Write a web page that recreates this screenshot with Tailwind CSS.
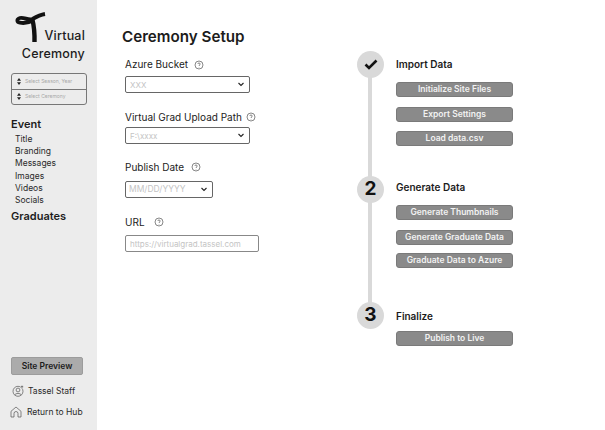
<!DOCTYPE html>
<html><head><meta charset="utf-8">
<script src="https://cdn.jsdelivr.net/npm/@tailwindcss/browser@4"></script>
</head>
<body class="bg-white">
<div class="flex w-[605px] h-[430px] overflow-hidden bg-white text-[#1c1c1c] font-['Inter',sans-serif]">

<aside class="w-[97px] h-full shrink-0 bg-[#ececec] flex flex-col">
  <div class="relative h-[73px] shrink-0">
    <svg class="absolute left-[15px] top-[12px]" width="32" height="32" viewBox="0 0 32 32" fill="none" stroke="#111" stroke-linecap="butt">
      <path d="M30 2C25 2.800 21 5 17.500 7 13.500 8.500 9 5 5 6 1.500 7 1.500 10 5 10.700 9 11.500 14 10.500 18 8.500" stroke-width="3.800"/>
      <path d="M17.500 8C19 14 19.700 22 19.500 30" stroke-width="4.400"/>
    </svg>
    <div class="absolute right-[12px] top-[27px] text-right text-[12.5px] leading-[18px] font-medium tracking-[0.2px]">Virtual<br>Ceremony</div>
  </div>
  <div class="ml-[11px] w-[76px] h-[32px] border border-[#777] rounded-[3px] flex flex-col text-[5px] text-[#a8a8a8]">
    <div class="flex-1 flex items-center border-b border-[#777] pl-[5px] gap-[4px]"><svg width="4" height="7" viewBox="0 0 4 7" fill="#222"><path d="M2 0 4 2.700H0ZM2 7 0 4.300H4Z"/></svg><span>Select Season, Year</span></div>
    <div class="flex-1 flex items-center pl-[5px] gap-[4px]"><svg width="4" height="7" viewBox="0 0 4 7" fill="#222"><path d="M2 0 4 2.700H0ZM2 7 0 4.300H4Z"/></svg><span>Select Ceremony</span></div>
  </div>
  <div class="ml-[11px] mt-[11px] text-[11px] leading-[16px] font-semibold">Event</div>
  <ul class="ml-[15px] mt-[1px] text-[8.500px] leading-[12.200px] text-[#2a2a2a]">
    <li>Title</li><li>Branding</li><li>Messages</li><li>Images</li><li>Videos</li><li>Socials</li>
  </ul>
  <div class="ml-[11px] mt-[2px] text-[11px] leading-[16px] font-semibold">Graduates</div>
  <div class="mt-auto ml-[11px] w-[72px] h-[18px] rounded-[2px] bg-[#ababab] border border-[#9c9c9c] flex items-center justify-center text-[8.500px] font-semibold">Site Preview</div>
  <div class="ml-[12px] mt-[8px] h-[16px] flex items-center gap-[4px] text-[8.500px] text-[#2a2a2a]">
    <svg width="12" height="12" viewBox="0 0 12 12" fill="none" stroke="#555" stroke-width=".7"><circle cx="6" cy="6.300" r="5"/><circle cx="6" cy="5" r="1.900"/><path d="M2.800 9.800C3.500 8 8.500 8 9.200 9.800"/><circle cx="10" cy="1.800" r="1.300" fill="#555" stroke="#ececec"/></svg>
    <span>Tassel Staff</span>
  </div>
  <div class="ml-[10px] mt-[5px] mb-[10px] h-[16px] flex items-center gap-[5px] text-[8.500px] text-[#2a2a2a]">
    <svg width="12" height="12" viewBox="0 0 12 12" fill="none" stroke="#555" stroke-width=".7" stroke-linejoin="round"><path d="M1 11V5.300L6 1l5 4.300V11H8V7.500a2 2 0 0 0-4 0V11Z"/></svg>
    <span>Return to Hub</span>
  </div>
</aside>

<main class="w-[260px] shrink-0 pl-[25px] pt-[27px]">
  <h1 class="text-[15.200px] leading-[20px] font-semibold">Ceremony Setup</h1>

  <div class="ml-[3px] mt-[9px] h-[14px] flex items-center gap-[6px] text-[10px] pt-[3px]">Azure Bucket
    <svg width="10" height="10" viewBox="0 0 10 10" fill="none" stroke="#555" stroke-width=".7"><circle cx="5" cy="5" r="4"/><path d="M3.800 4C3.800 2.600 6.200 2.600 6.200 4 6.200 5 5 5 5 6M5 7v.4"/></svg>
  </div>
  <div class="ml-[3px] mt-[6px] w-[125px] h-[17px] border border-[#666] rounded-[2px] flex items-center justify-between px-[4px] text-[8px] text-[#c4c4c4]"><span>XXX</span>
    <svg width="8" height="5" viewBox="0 0 8 5" fill="none" stroke="#222" stroke-width="1.100"><path d="M1.500 1 4 3.500 6.500 1"/></svg></div>

  <div class="ml-[3px] mt-[17px] h-[14px] flex items-center gap-[4px] text-[10px]">Virtual Grad Upload Path
    <svg width="10" height="10" viewBox="0 0 10 10" fill="none" stroke="#555" stroke-width=".7"><circle cx="5" cy="5" r="4"/><path d="M3.800 4C3.800 2.600 6.200 2.600 6.200 4 6.200 5 5 5 5 6M5 7v.4"/></svg>
  </div>
  <div class="ml-[3px] mt-[3px] w-[125px] h-[17px] border border-[#666] rounded-[2px] flex items-center justify-between px-[4px] text-[8px] text-[#c4c4c4]"><span>F:\xxxx</span>
    <svg width="8" height="5" viewBox="0 0 8 5" fill="none" stroke="#222" stroke-width="1.100"><path d="M1.500 1 4 3.500 6.500 1"/></svg></div>

  <div class="ml-[3px] mt-[16px] h-[14px] flex items-center gap-[7px] text-[10px]">Publish Date
    <svg width="10" height="10" viewBox="0 0 10 10" fill="none" stroke="#555" stroke-width=".7"><circle cx="5" cy="5" r="4"/><path d="M3.800 4C3.800 2.600 6.200 2.600 6.200 4 6.200 5 5 5 5 6M5 7v.4"/></svg>
  </div>
  <div class="ml-[3px] mt-[7px] w-[88px] h-[17px] border border-[#666] rounded-[2px] flex items-center justify-between pl-[3px] pr-[4px] text-[8.500px] text-[#c4c4c4]"><span>MM/DD/YYYY</span>
    <svg width="8" height="5" viewBox="0 0 8 5" fill="none" stroke="#222" stroke-width="1.100"><path d="M1.500 1 4 3.500 6.500 1"/></svg></div>

  <div class="ml-[3px] mt-[17px] h-[14px] flex items-center gap-[9px] text-[10px]">URL
    <svg width="10" height="10" viewBox="0 0 10 10" fill="none" stroke="#555" stroke-width=".7"><circle cx="5" cy="5" r="4"/><path d="M3.800 4C3.800 2.600 6.200 2.600 6.200 4 6.200 5 5 5 5 6M5 7v.4"/></svg>
  </div>
  <div class="ml-[3px] mt-[6px] w-[134px] h-[17px] border border-[#888] rounded-[2px] flex items-center px-[4px] text-[8px] text-[#c4c4c4]">https://virtualgrad.tassel.com</div>
</main>

<section class="relative flex-1 pt-[51px]">
  <div class="absolute left-[11px] top-[65px] w-[4px] h-[250px] bg-[#d9d9d9]"></div>

  <div class="relative flex h-[125px]">
    <div class="w-[27px] h-[27px] rounded-full bg-[#d9d9d9] flex items-center justify-center">
      <svg width="14" height="11" viewBox="0 0 14 11" fill="none" stroke="#111" stroke-width="2.600"><path d="M1.500 5.500 5 9 12.500 1.500"/></svg>
    </div>
    <div class="ml-[12px] w-[117px] flex flex-col">
      <div class="h-[26px] flex items-center text-[10px] font-semibold">Import Data</div>
      <div class="mt-[5px] h-[15px] rounded-[3px] bg-[#8a8a8a] border border-[#7a7a7a] flex items-center justify-center text-[8.500px] font-semibold text-[#f2f2f2]">Initialize Site Files</div>
      <div class="mt-[10px] h-[15px] rounded-[3px] bg-[#8a8a8a] border border-[#7a7a7a] flex items-center justify-center text-[8.500px] font-semibold text-[#f2f2f2]">Export Settings</div>
      <div class="mt-[9px] h-[15px] rounded-[3px] bg-[#8a8a8a] border border-[#7a7a7a] flex items-center justify-center text-[8.500px] font-semibold text-[#f2f2f2]">Load data.csv</div>
    </div>
  </div>

  <div class="relative flex h-[126px]">
    <div class="w-[27px] h-[27px] rounded-full bg-[#d9d9d9] flex items-center justify-center text-[19px] font-bold text-[#111]">2</div>
    <div class="ml-[12px] w-[117px] flex flex-col">
      <div class="h-[22px] flex items-center text-[10px] font-semibold">Generate Data</div>
      <div class="mt-[7px] h-[15px] rounded-[3px] bg-[#8a8a8a] border border-[#7a7a7a] flex items-center justify-center text-[8.500px] font-semibold text-[#f2f2f2]">Generate Thumbnails</div>
      <div class="mt-[10px] h-[15px] rounded-[3px] bg-[#8a8a8a] border border-[#7a7a7a] flex items-center justify-center text-[8.500px] font-semibold text-[#f2f2f2]">Generate Graduate Data</div>
      <div class="mt-[8px] h-[15px] rounded-[3px] bg-[#8a8a8a] border border-[#7a7a7a] flex items-center justify-center text-[8.500px] font-semibold text-[#f2f2f2]">Graduate Data to Azure</div>
    </div>
  </div>

  <div class="relative flex">
    <div class="w-[27px] h-[27px] rounded-full bg-[#d9d9d9] flex items-center justify-center text-[19px] font-bold text-[#111]">3</div>
    <div class="ml-[12px] w-[117px] flex flex-col">
      <div class="h-[28px] flex items-center text-[10px] font-semibold">Finalize</div>
      <div class="mt-[1px] h-[15px] rounded-[3px] bg-[#8a8a8a] border border-[#7a7a7a] flex items-center justify-center text-[8.500px] font-semibold text-[#f2f2f2]">Publish to Live</div>
    </div>
  </div>
</section>
</div>
</body></html>
